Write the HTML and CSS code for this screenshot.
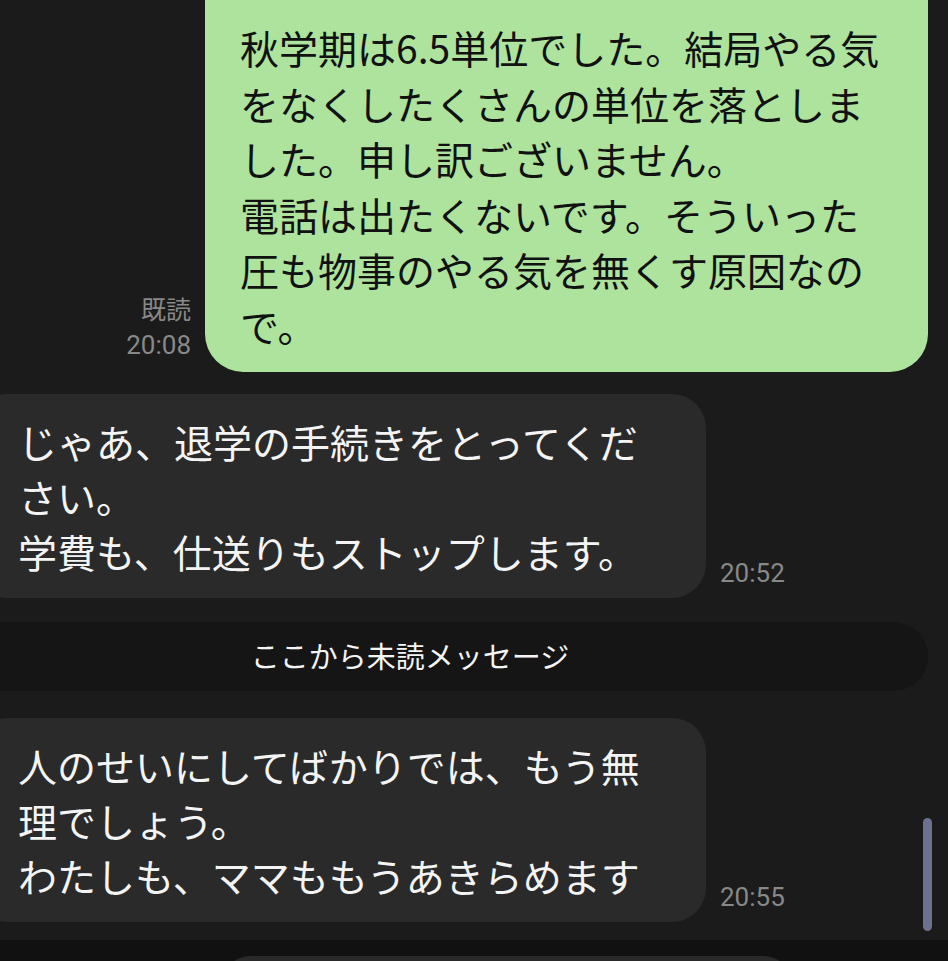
FILE: index.html
```html
<!DOCTYPE html>
<html lang="ja">
<head>
  <meta charset="UTF-8">
  <meta name="viewport" content="width=device-width, initial-scale=1.0">
  <title>トーク</title>
  <link rel="stylesheet" href="styles.css">
</head>
<body>
  <div class="chat">
    <div class="row sent first">
      <div class="meta">
        <span>既読</span>
        <span class="time">20:08</span>
      </div>
      <div class="bubble green">秋学期は6.5単位でした。結局やる気をなくしたくさんの単位を落としました。申し訳ございません。<br>電話は出たくないです。そういった圧も物事のやる気を無くす原因なので。</div>
    </div>

    <div class="row recv gap-a">
      <div class="bubble gray">じゃあ、退学の手続きをとってください。<br>学費も、仕送りもストップします。</div>
      <div class="meta"><span class="time">20:52</span></div>
    </div>

    <div class="unread">ここから未読メッセージ</div>

    <div class="row recv gap-b">
      <div class="bubble gray">人のせいにしてばかりでは、もう無理でしょう。<br>わたしも、ママももうあきらめます</div>
      <div class="meta"><span class="time">20:55</span></div>
    </div>

    <div class="next">
      <div class="next-bubble"></div>
    </div>
  </div>

  <div class="scrollbar"></div>
</body>
</html>
```

FILE: styles.css
```css
body {
  margin: 0;
  height: 961px;
  overflow: hidden;
  background-color: #1b1b1b;
  font-family: "Noto Sans CJK JP", "Noto Sans", sans-serif;
  position: relative;
}
.chat {
  display: flex;
  flex-direction: column;
}
.row {
  display: flex;
  align-items: flex-end;
  gap: 14px;
}
.row.sent {
  justify-content: flex-end;
  padding-right: 20px;
}
.row.first {
  margin-top: -40px;
}
.gap-a {
  margin-top: 22px;
}
.gap-b {
  margin-top: 27px;
}
.bubble {
  font-size: 39px;
  line-height: 55px;
  word-break: break-all;
}
.green {
  width: 650px;
  padding: 60px 38px 19px 35px;
  line-height: 55.5px;
  background-color: #ade39c;
  color: #111;
  border-radius: 38px;
}
.gray {
  width: 648px;
  margin-left: -26px;
  padding: 20px 40px 19px 44px;
  background-color: #2a2a2a;
  color: #f4f4f4;
  border-radius: 34px;
}
.meta {
  display: flex;
  flex-direction: column;
  align-items: flex-end;
  font-family: Roboto, "Noto Sans CJK JP", sans-serif;
  font-size: 25px;
  line-height: 34px;
  color: #888;
  margin-bottom: 10px;
}
.recv .meta {
  margin-bottom: 8px;
}
.time {
  font-size: 26px;
}
.unread {
  margin: 24px 20px 0 -108px;
  height: 65px;
  padding-bottom: 4px;
  display: flex;
  align-items: center;
  justify-content: center;
  background-color: #151515;
  border-radius: 35px;
  color: #f4f4f4;
  font-size: 29px;
}
.next {
  margin-top: 18px;
  height: 5px;
  padding-top: 16px;
  overflow: hidden;
  background-color: #111;
}
.next-bubble {
  margin-left: 221px;
  width: 572px;
  height: 60px;
  background-color: #2a2a2a;
  border-radius: 30px;
}
.scrollbar {
  position: absolute;
  left: 923px;
  top: 818px;
  width: 9px;
  height: 113px;
  border-radius: 5px;
  background-color: #6d7190;
}
```
